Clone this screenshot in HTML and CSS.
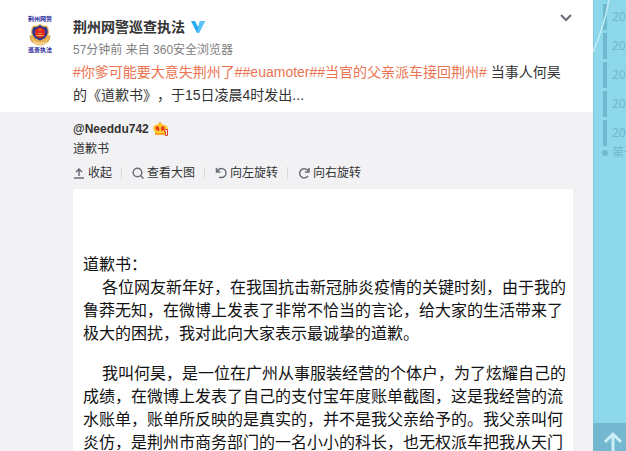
FILE: index.html
```html
<!DOCTYPE html>
<html lang="zh-CN">
<head>
    <meta charset="UTF-8">
    <meta name="viewport" content="width=device-width, initial-scale=1.0">
    <title>荆州网警巡查执法</title>
    <link rel="stylesheet" href="styles.css">
</head>
<body>
    <main class="feed">
        <article>
            <div class="post">
                <div class="avatar">
                    <span class="avatar-text">荆州网警</span>
                    <svg class="badge" viewBox="0 0 24 24">
                        <path d="M1 12q3 2 4-2h14q1 4 4 2c1 4-1 8-5 9.500-3 2.500-9 2.500-12 0C2 20 0 16 1 12z" fill="#e2a94a"/>
                        <path d="M3 16q4 5 9 5t9-5M5 20q7 4 14 0" fill="none" stroke="#fbe3ae" stroke-width="1"/>
                        <path d="M12 0l3 1.500L20 2c3 6 2 11-2 14l-6 3-6-3C2 13 1 8 4 2l5-.5z" fill="#e6b25c"/>
                        <path d="M12 1l3 2 4 .5c3 5 1 9-2 12l-5 2.500-5-2.500C4 12.500 2 8.500 5 3.500L9 3z" fill="#29368f"/>
                        <circle cx="12" cy="9.500" r="5.800" fill="#dc2a20"/>
                        <path d="M8 12h8v1H8zM10 10h4v1h-4zM12 5l1 2h-2z" fill="#f5b848"/>
                    </svg>
                    <span class="avatar-text">巡查执法</span>
                </div>
                <div class="post-body">
                    <div class="post-head">
                        <a class="name" href="#">荆州网警巡查执法</a>
                        <svg class="verified" viewBox="0 0 14 12">
                            <path d="M0 0h4l3 6 2-6h5L8 12H6z" fill="#29a8f5"/>
                            <path d="M9 0h5L8 12H6z" fill="#58c4fb"/>
                        </svg>
                        <button class="more" aria-label="更多">
                            <svg viewBox="0 0 14 8"><path d="M2 1l5 5 5-5" fill="none" stroke="#696e78" stroke-width="2"/></svg>
                        </button>
                    </div>
                    <div class="from"><a href="#">57分钟前</a> 来自 <a href="#">360安全浏览器</a></div>
                    <p class="text"><a href="#">#你爹可能要大意失荆州了#</a><a href="#">#euamoter#</a><a href="#">#当官的父亲派车接回荆州#</a> 当事人何昊的《道歉书》，于15日凌晨4时发出...</p>
                </div>
            </div>

            <div class="repost">
                <div class="repost-head">
                    <a class="repost-name" href="#">@Needdu742</a>
                    <svg class="crown" viewBox="0 0 16 14">
                        <circle cx="7" cy="1" r="1" fill="#f08a20"/>
                        <path d="M7 1c2 0 3 2 4 2 4 0 5 4 2 7v3H2v-3C-1 7 0 3 3 3c1 0 2-2 4-2z" fill="#fdc72f"/>
                        <path d="M4 4c2 0 3 3 2 5C3 9 1 5 4 4zM10 4c3 1 1 5-1 5-2-2-1-5 1-5z" fill="#e8391c"/>
                        <path d="M2 11h11v2H2z" fill="#f6a623"/>
                        <path d="M11.500 7.500h3v6h-2v-4h-1z" fill="#fff" stroke="#df3a22"/>
                    </svg>
                </div>
                <p class="repost-text">道歉书</p>
                <div class="tools">
                    <button class="tool">
                        <svg viewBox="0 0 12 12"><path d="M1 11h10M6 9V2M3 5l3-3 3 3"/></svg>收起
                    </button>
                    <button class="tool">
                        <svg viewBox="0 0 12 12"><circle cx="5.5" cy="5.5" r="4.3"/><path d="M8.5 8.5l3 3"/></svg>查看大图
                    </button>
                    <button class="tool">
                        <svg viewBox="0 0 12 12"><path d="M1.500 1v4h4M2 4.500C3.500 2 5 1.500 6.500 1.500a4.500 4.500 0 0 1 0 9H4"/></svg>向左旋转
                    </button>
                    <button class="tool">
                        <svg viewBox="0 0 12 12"><path d="M11 1v4H7M10.500 4.500A4.600 4.600 0 1 0 10 9"/></svg>向右旋转
                    </button>
                </div>
                <div class="letter">
                    <p class="title">道歉书：</p>
                    <p>各位网友新年好，在我国抗击新冠肺炎疫情的关键时刻，由于我的<br>鲁莽无知，在微博上发表了非常不恰当的言论，给大家的生活带来了<br>极大的困扰，我对此向大家表示最诚挚的道歉。</p>
                    <p>我叫何昊，是一位在广州从事服装经营的个体户，为了炫耀自己的<br>成绩，在微博上发表了自己的支付宝年度账单截图，这是我经营的流<br>水账单，账单所反映的是真实的，并不是我父亲给予的。我父亲叫何<br>炎仿，是荆州市商务部门的一名小小的科长，也无权派车把我从天门</p>
                </div>
            </div>
        </article>
    </main>

    <aside class="side">
        <svg class="curve" viewBox="0 0 33 60"><path d="M16 0Q11 27 0 52" fill="none" stroke="#c3ebf5" stroke-width="1.500"/></svg>
        <ul class="years">
            <li><a href="#">20</a></li>
            <li><a href="#">20</a></li>
            <li><a href="#">20</a></li>
            <li><a href="#">20</a></li>
            <li><a href="#">20</a></li>
            <li class="first"><a href="#">第一</a></li>
        </ul>
        <button class="to-top" aria-label="返回顶部">
            <svg viewBox="0 0 20 24"><path d="M10 24V3M2 11l8-8 8 8" fill="none" stroke="#c9eef8" stroke-width="3"/></svg>
        </button>
    </aside>
</body>
</html>
```

FILE: styles.css
```css
* {
    box-sizing: border-box;
}
body {
    margin: 0;
    height: 100vh;
    overflow: hidden;
    display: flex;
    background-color: #8cd7ea;
    font-family: "Liberation Sans", "Noto Sans CJK SC", sans-serif;
    font-size: 12px;
    color: #333;
    text-spacing-trim: space-all;
}
p, ul {
    margin: 0;
    padding: 0;
}
a {
    color: inherit;
    text-decoration: none;
}
button {
    padding: 0;
    border: none;
    background: none;
    font: inherit;
    color: inherit;
    cursor: pointer;
}
svg {
    display: block;
    flex: none;
}

/* feed */
.feed {
    flex: 1;
    min-width: 0;
    overflow: hidden;
    background-color: #fff;
}
.post {
    display: flex;
    padding: 14px 20px 5px 28px;
}
.avatar {
    width: 24px;
    margin: 2px 21px 0 0;
    display: flex;
    flex-direction: column;
    align-items: center;
}
.avatar-text {
    font-size: 6px;
    line-height: 7px;
    color: #2c2c9c;
    font-weight: bold;
    white-space: nowrap;
}
.badge {
    width: 22px;
    height: 24px;
}
.post-body {
    flex: 1;
    min-width: 0;
}
.post-head {
    display: flex;
    align-items: flex-end;
    height: 24px;
    margin-bottom: 1px;
}
.name {
    font-size: 14px;
    line-height: 22px;
    font-weight: bold;
}
.verified {
    width: 14px;
    height: 12px;
    margin: 0 0 5px 6px;
}
.more {
    margin-left: auto;
    align-self: flex-start;
}
.more svg {
    width: 14px;
    height: 8px;
}
.from {
    line-height: 22px;
    color: #808080;
}
.text {
    font-size: 14px;
    line-height: 23px;
}
.text a {
    color: #eb7350;
}

/* repost */
.repost {
    padding: 7px 20px 0 73px;
    background-color: #f2f2f5;
}
.repost-head {
    display: flex;
    align-items: center;
    line-height: 20px;
}
.repost-name {
    font-weight: bold;
}
.crown {
    width: 16px;
    height: 14px;
    margin-left: 4px;
}
.repost-text {
    line-height: 20px;
}
.tools {
    display: flex;
    padding: 4px 0 6px;
}
.tool {
    display: flex;
    align-items: center;
    gap: 3px;
    line-height: 20px;
}
.tool + .tool::before {
    content: "";
    width: 1px;
    height: 12px;
    margin: 0 7px 0 9px;
    background-color: #d9d9d9;
}
.tool svg {
    width: 12px;
    height: 12px;
    fill: none;
    stroke: #696e78;
    stroke-width: 1.5;
}
.letter {
    padding: 63px 0 20px 10px;
    background-color: #fff;
    font-family: "Noto Sans CJK SC", sans-serif;
    font-size: 16px;
    line-height: 23px;
    color: #111;
    white-space: nowrap;
}
.letter p {
    margin-bottom: 17px;
    text-indent: 19px;
}
.letter .title {
    margin-bottom: 0;
    text-indent: 0;
}

/* side */
.side {
    position: relative;
    width: 33px;
    overflow: hidden;
    display: flex;
    flex-direction: column;
    justify-content: space-between;
    box-shadow: inset 1px 0 #7fc9dd;
    color: #70b8cf;
}
.curve {
    position: absolute;
    top: 0;
    left: 0;
    width: 33px;
    height: 60px;
}
.years {
    padding: 4px 0 0 10px;
    list-style: none;
    font-family: "Noto Sans", "Noto Sans CJK SC", sans-serif;
    white-space: nowrap;
}
.years li {
    height: 26px;
    margin-bottom: 3px;
    padding-left: 5px;
    border-left: 4px solid #70b8cf;
    line-height: 26px;
}
.years .first {
    display: flex;
    align-items: center;
    gap: 4px;
    height: 8px;
    padding: 0;
    border: none;
    margin-left: -1px;
}
.first::before {
    content: "";
    flex: none;
    width: 6px;
    height: 6px;
    border-radius: 50%;
    background-color: #70b8cf;
}
.to-top {
    height: 28px;
    padding: 8px 0 0 10px;
    overflow: hidden;
    background-color: #74b8cf;
}
.to-top svg {
    width: 20px;
    height: 24px;
}
```
